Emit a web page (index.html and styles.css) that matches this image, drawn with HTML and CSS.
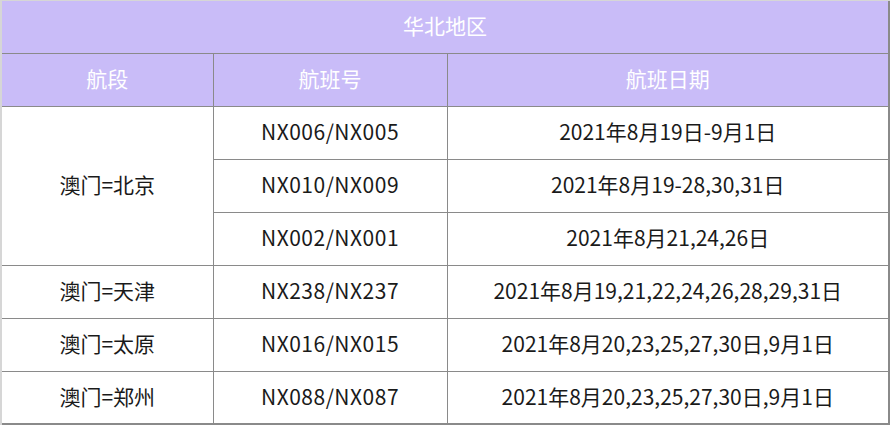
FILE: index.html
```html
<!DOCTYPE html>
<html lang="zh">
<head>
<meta charset="utf-8">
<link rel="stylesheet" href="styles.css">
</head>
<body>
<div class="frame">
<table class="flights">
  <colgroup><col class="c1"><col class="c2"><col class="c3"></colgroup>
  <thead>
    <tr class="title-row"><th colspan="3">华北地区</th></tr>
    <tr><th>航段</th><th>航班号</th><th>航班日期</th></tr>
  </thead>
  <tbody>
    <tr><td rowspan="3" class="route">澳门=北京</td><td class="num">NX006/NX005</td><td>2021年8月19日-9月1日</td></tr>
    <tr><td class="num">NX010/NX009</td><td>2021年8月19-28,30,31日</td></tr>
    <tr><td class="num">NX002/NX001</td><td>2021年8月21,24,26日</td></tr>
    <tr><td class="route">澳门=天津</td><td class="num">NX238/NX237</td><td>2021年8月19,21,22,24,26,28,29,31日</td></tr>
    <tr><td class="route">澳门=太原</td><td class="num">NX016/NX015</td><td>2021年8月20,23,25,27,30日,9月1日</td></tr>
    <tr><td class="route">澳门=郑州</td><td class="num">NX088/NX087</td><td>2021年8月20,23,25,27,30日,9月1日</td></tr>
  </tbody>
</table>
</div>
</body>
</html>
```
FILE: styles.css
```css
html, body { margin: 0; padding: 0; background: #ffffff; }
.frame {
  width: 890px;
  border-top: 1px solid #d6d6d6;
  border-left: 2px solid #d6d6d6;
  box-sizing: border-box;
}
.flights {
  border-collapse: collapse;
  width: 888px;
  table-layout: fixed;
  font-family: "Microsoft YaHei", "Noto Sans CJK SC", "Noto Sans", sans-serif;
  font-size: 21px;
  color: #1a1a1a;
}
.c1 { width: 211px; }
.c2 { width: 234px; }
.flights th, .flights td {
  border: 1px solid #8a8a8a;
  height: 53px;
  padding: 0 0 3px 0;
  text-align: center;
  vertical-align: middle;
  box-sizing: border-box;
  line-height: 24px;
}
.title-row th { border-top: none; height: 52px; }
.flights th {
  background: #c9bcf8;
  color: #ffffff;
  font-weight: normal;
}
.flights th:first-child, .flights .route { border-left: none; }
.flights td { background: #ffffff; }
.flights .num { letter-spacing: 0.5px; }
.flights tr > :last-child { border-right: 2px solid #8a8a8a; }
.flights tbody tr:last-child td { border-bottom: 2px solid #8a8a8a; }
```
